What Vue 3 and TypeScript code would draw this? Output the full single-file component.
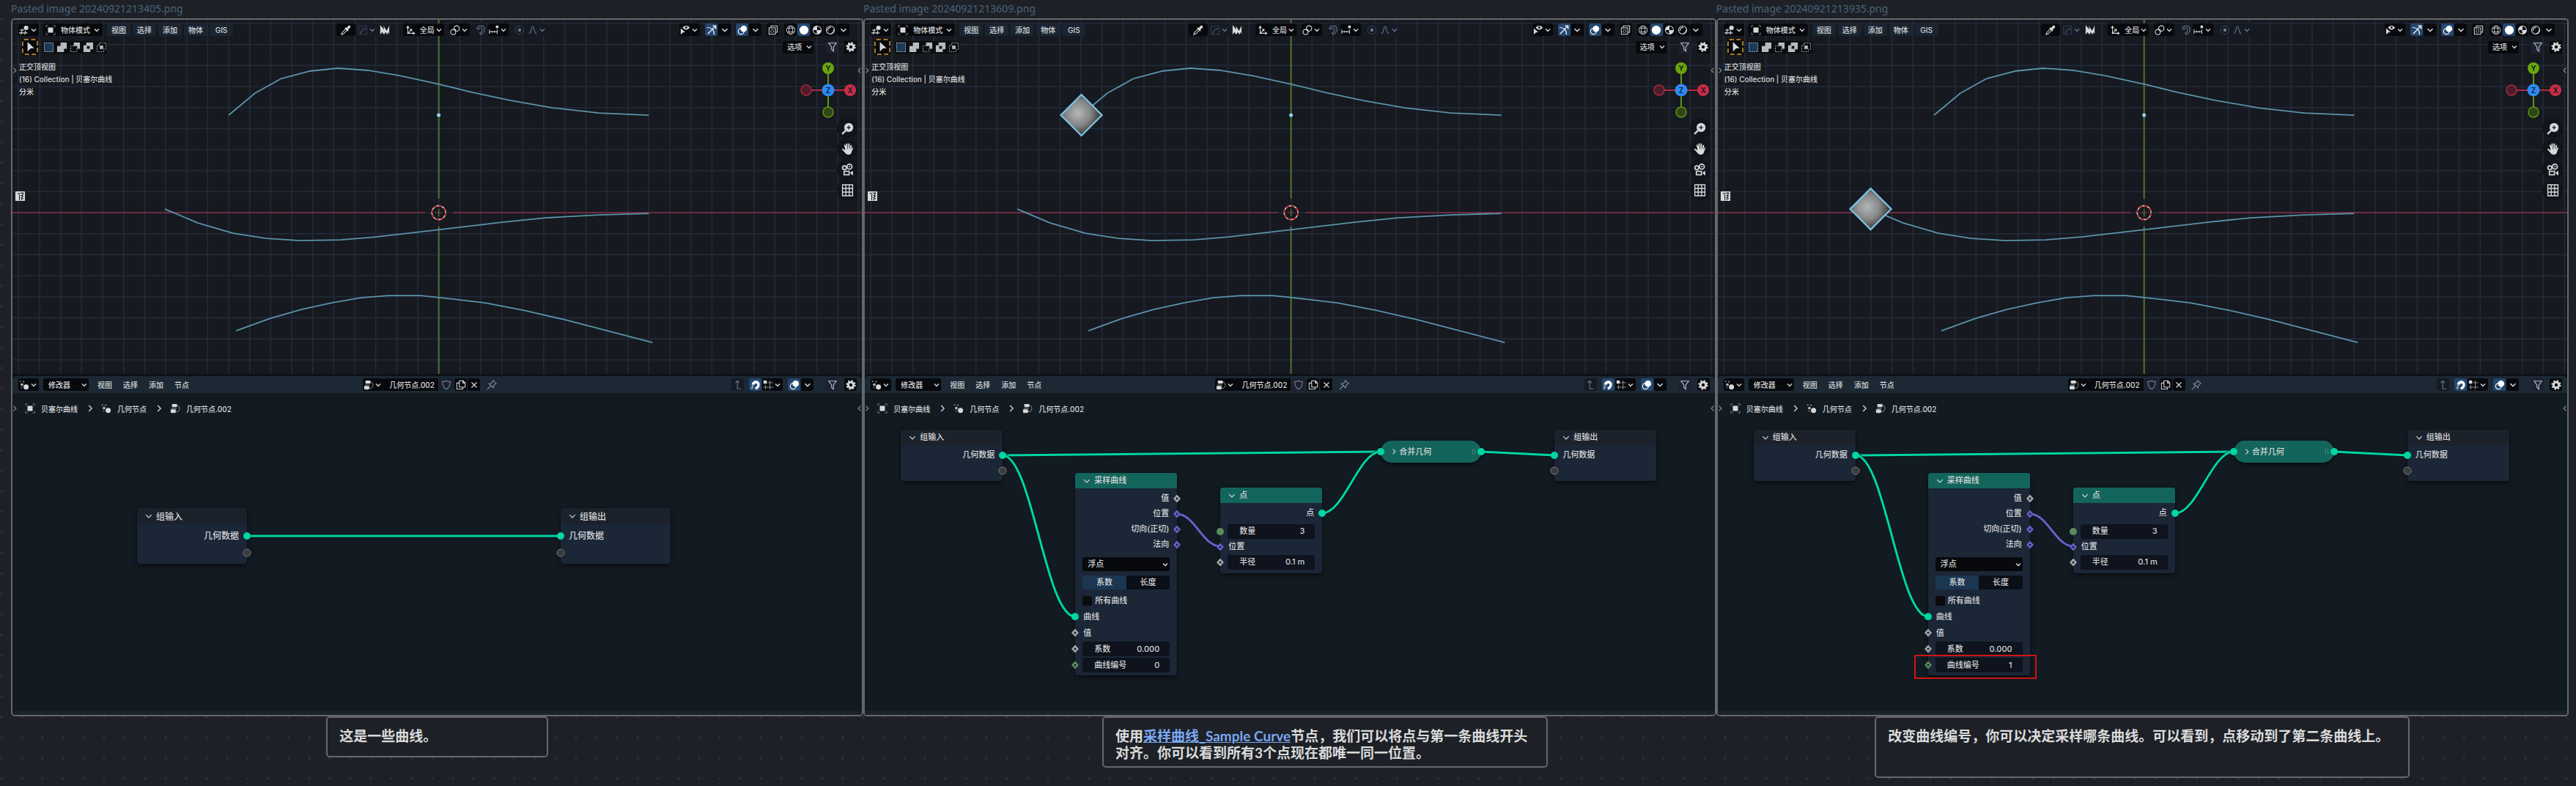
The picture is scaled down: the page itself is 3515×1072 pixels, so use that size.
<script setup lang="ts">
interface Tool { icon: string; name: string; drop?: boolean; on?: boolean; dim?: boolean; flat?: boolean }
type SocketKind = 'geo' | 'virtual' | 'value' | 'vector' | 'int' | 'count'
interface Row {
  kind: 'out' | 'in' | 'field' | 'select' | 'toggle' | 'check'
  label: string
  value?: string
  socket?: SocketKind
}
interface NodeBox { id: string; title: string; x: number; y: number; look: string; rows: Row[]; boxed?: boolean }
interface Link { d: string; color: string }
interface Note { size: string; parts: { text: string; link?: boolean }[][] }
interface Panel {
  id: string
  file: string
  gem?: [number, number]
  nodes: NodeBox[]
  links: Link[]
  note: Note
}

const GREEN = '#00d6a3'
const VIOLET = '#6660c8'
const STEP = 28.66
const ORIGIN = { x: 598.5, y: 290 }
const columns = Array.from({ length: 41 }, (_, i) => ORIGIN.x + (i - 20) * STEP)
const lines = Array.from({ length: 17 }, (_, i) => ORIGIN.y + (i - 9) * STEP)

const curves = [
  '312,157 348,127 384,107 422,97 461,93 503,96 545,103 600,115 645,126 697,137 754,147 817,154 885,157',
  '225,285 270,304 318,318 363,325 409,328 465,327 513,323 600,313 685,303 744,297 817,293 885,291',
  '322,451 369,434 411,422 452,413 492,406 530,403 574,403 620,408 662,413 714,423 771,436 890,467',
]

const paintTools: Tool[] = [
  { icon: 'arc', name: '曲线', drop: true, dim: true },
  { icon: 'spikes', name: '毛发', flat: true },
]
const midGroups: Tool[][] = [
  [{ icon: 'link', name: '轴心点', drop: true }],
  [{ icon: 'magnet', name: '吸附', dim: true }, { icon: 'steps', name: '吸附到', drop: true }],
  [{ icon: 'dot', name: '衰减编辑', dim: true }, { icon: 'bell', name: '衰减', drop: true, dim: true }],
]
const viewGroups: Tool[][] = [
  [{ icon: 'eye', name: '可见性', drop: true }],
  [{ icon: 'gizmo', name: '控件', on: true }, { icon: 'down', name: '控件选项' }],
  [{ icon: 'overlay', name: '叠加层', on: true }, { icon: 'down', name: '叠加层选项' }],
  [{ icon: 'xray', name: '透视模式' }],
  [
    { icon: 'wire', name: '线框' },
    { icon: 'solid', name: '实体', on: true },
    { icon: 'material', name: '材质' },
    { icon: 'render', name: '渲染' },
    { icon: 'down', name: '着色选项' },
  ],
]
const nodeGroups: Tool[][] = [
  [{ icon: 'parent', name: '上一级', dim: true }],
  [{ icon: 'magnetOn', name: '吸附', on: true }, { icon: 'snapGrid', name: '吸附到', drop: true }],
  [{ icon: 'overlay', name: '叠加层', on: true }, { icon: 'down', name: '叠加层选项' }],
]
const selectModes = ['modeSet', 'modeAdd', 'modeSub', 'modeDiff', 'modeAnd']
const viewMenus = ['视图', '选择', '添加', '物体', 'GIS']
const nodeMenus = ['视图', '选择', '添加', '节点']
const navTools = ['zoom', 'hand', 'camera', 'ortho']

const groupIn: Row[] = [
  { kind: 'out', label: '几何数据', socket: 'geo' },
  { kind: 'out', label: '', socket: 'virtual' },
]
const groupOut: Row[] = [
  { kind: 'in', label: '几何数据', socket: 'geo' },
  { kind: 'in', label: '', socket: 'virtual' },
]

function sampleNodes(index: string, boxed: boolean): NodeBox[] {
  return [
    { id: 'in', title: '组输入', x: 49, y: 50, look: 'group', rows: groupIn },
    {
      id: 'sample', title: '采样曲线', x: 287, y: 109, look: 'geometry sample', boxed,
      rows: [
        { kind: 'out', label: '值', socket: 'value' },
        { kind: 'out', label: '位置', socket: 'vector' },
        { kind: 'out', label: '切向(正切)', socket: 'vector' },
        { kind: 'out', label: '法向', socket: 'vector' },
        { kind: 'select', label: '浮点' },
        { kind: 'toggle', label: '系数', value: '长度' },
        { kind: 'check', label: '所有曲线' },
        { kind: 'in', label: '曲线', socket: 'geo' },
        { kind: 'in', label: '值', socket: 'value' },
        { kind: 'field', label: '系数', value: '0.000', socket: 'value' },
        { kind: 'field', label: '曲线编号', value: index, socket: 'int' },
      ],
    },
    {
      id: 'points', title: '点', x: 485, y: 129, look: 'geometry points',
      rows: [
        { kind: 'out', label: '点', socket: 'geo' },
        { kind: 'field', label: '数量', value: '3', socket: 'count' },
        { kind: 'in', label: '位置', socket: 'vector' },
        { kind: 'field', label: '半径', value: '0.1 m', socket: 'value' },
      ],
    },
    { id: 'join', title: '合并几何', x: 704, y: 65, look: 'pill', rows: [] },
    { id: 'out', title: '组输出', x: 941, y: 50, look: 'group', rows: groupOut },
  ]
}
const sampleLinks: Link[] = [
  { d: 'M188 85 L704 80', color: GREEN },
  { d: 'M188 85 C228 85 247 305 287 305', color: GREEN },
  { d: 'M624 164 C654 164 674 80 704 80', color: GREEN },
  { d: 'M841 80 L941 85', color: GREEN },
  { d: 'M426 165 C450 165 461 209 485 209', color: VIOLET },
]

const panels: Panel[] = [
  {
    id: 'a',
    file: 'Pasted image 20240921213405.png',
    nodes: [
      { id: 'in', title: '组输入', x: 170, y: 157, look: 'group large', rows: groupIn },
      { id: 'out', title: '组输出', x: 748, y: 157, look: 'group large', rows: groupOut },
    ],
    links: [{ d: 'M320 195 L748 195', color: GREEN }],
    note: { size: 'small', parts: [[{ text: '这是一些曲线。' }]] },
  },
  {
    id: 'b',
    file: 'Pasted image 20240921213609.png',
    gem: [312.5, 157],
    nodes: sampleNodes('0', false),
    links: sampleLinks,
    note: {
      size: 'medium',
      parts: [
        [
          { text: '使用' },
          { text: '采样曲线_Sample Curve', link: true },
          { text: '节点，我们可以将点与第一条曲线开头' },
        ],
        [{ text: '对齐。你可以看到所有3个点现在都唯一同一位置。' }],
      ],
    },
  },
  {
    id: 'c',
    file: 'Pasted image 20240921213935.png',
    gem: [225.5, 285],
    nodes: sampleNodes('1', true),
    links: sampleLinks,
    note: {
      size: 'wide',
      parts: [[{ text: '改变曲线编号，你可以决定采样哪条曲线。可以看到，点移动到了第二条曲线上。' }]],
    },
  },
]

const isRound = (s?: SocketKind) => s === 'geo' || s === 'virtual' || s === 'count'
const gemPoints = ([x, y]: [number, number]) => `${x},${y - 28} ${x + 28},${y} ${x},${y + 28} ${x - 28},${y}`
</script>

<template>
  <svg class="defs" aria-hidden="true">
    <defs>
      <radialGradient id="gemFill" cx="0.42" cy="0.45" r="0.55">
        <stop offset="0" stop-color="#b4b6b8" />
        <stop offset="0.55" stop-color="#858686" />
        <stop offset="1" stop-color="#383532" />
      </radialGradient>
    </defs>
    <symbol id="down" viewBox="0 0 16 16"><path d="M4 6l4 4 4-4" fill="none" stroke="currentColor" stroke-width="1.8" /></symbol>
    <symbol id="right" viewBox="0 0 16 16"><path d="M6 3.5l4.5 4.5L6 12.5" fill="none" stroke="currentColor" stroke-width="1.5" /></symbol>
    <symbol id="fold" viewBox="0 0 16 16"><path d="M3 5.5l5 5 5-5" fill="none" stroke="currentColor" stroke-width="1.6" /></symbol>
    <symbol id="editor" viewBox="0 0 16 16">
      <path d="M1 8h7M0 12.5h13M5 6L3 15M10 9l-1 6" fill="none" stroke="currentColor" stroke-width="1.3" /><circle cx="11" cy="4.5" r="3.5" fill="currentColor" />
    </symbol>
    <symbol id="object" viewBox="0 0 16 16">
      <rect x="4" y="4" width="8" height="8" fill="currentColor" /><path d="M1 4V1h3M12 1h3v3M15 12v3h-3M4 15H1v-3" fill="none" stroke="currentColor" stroke-opacity="0.6" />
    </symbol>
    <symbol id="cursor" viewBox="0 0 16 16"><path d="M5 2l8 7.5-4.2.3L5 13.5z" fill="currentColor" /></symbol>
    <symbol id="modeSet" viewBox="0 0 16 16"><rect x="1.5" y="1.5" width="13" height="13" fill="#1b3a57" stroke="#d8e6f0" stroke-dasharray="1.5 1.5" /></symbol>
    <symbol id="modeAdd" viewBox="0 0 16 16"><path d="M6 1h9v9h-4v5H1V6h5z" fill="currentColor" /></symbol>
    <symbol id="modeSub" viewBox="0 0 16 16"><path d="M6 1h9v9h-4V6H6z" fill="currentColor" /><path d="M6 6H1.5v8.5h9V10" fill="none" stroke="currentColor" stroke-dasharray="2 1.5" /></symbol>
    <symbol id="modeDiff" viewBox="0 0 16 16"><path fill-rule="evenodd" d="M5 1h10v10h-4v4H1V5h4zM6 6v4h4V6z" fill="currentColor" /></symbol>
    <symbol id="modeAnd" viewBox="0 0 16 16"><rect x="5.5" y="5.5" width="5" height="5" fill="currentColor" /><path d="M5 1.5h9.5V11H11v3.5H1.5V5H5z" fill="none" stroke="currentColor" stroke-dasharray="2 1.5" /></symbol>
    <symbol id="dropper" viewBox="0 0 16 16"><path d="M1 15l1-3 6-6 2 2-6 6z" fill="none" stroke="currentColor" stroke-width="1.2" /><path d="M7 4l2 .5L12 1c2-1 4 1 3 3l-3.5 3 .5 2-1.5 1L6 5.5z" fill="currentColor" /></symbol>
    <symbol id="arc" viewBox="0 0 16 16"><rect x="1.5" y="2" width="13" height="12.5" fill="none" stroke="currentColor" stroke-opacity="0.4" /><path d="M5 14c0-5 3-8 8-8" fill="none" stroke="currentColor" /></symbol>
    <symbol id="spikes" viewBox="0 0 16 16"><path d="M1 0l3 4 3 3L6 1l5 8 4-8v13l-2-3-1 4-3-4-2 4-3-4-3 4z" fill="currentColor" /></symbol>
    <symbol id="axes" viewBox="0 0 16 16"><path d="M4 14V3M2 5l2-3 2 3M3 13h11M12 11l2.5 2-2.5 2M4 13l6-6M7 7h3v3" fill="none" stroke="currentColor" stroke-width="1.2" /></symbol>
    <symbol id="link" viewBox="0 0 16 16"><circle cx="10.5" cy="5.5" r="4.2" fill="none" stroke="currentColor" stroke-width="1.3" /><circle cx="5" cy="11" r="4" fill="none" stroke="currentColor" stroke-width="1.3" /><circle cx="8" cy="8" r="1.5" fill="currentColor" /></symbol>
    <symbol id="magnet" viewBox="0 0 16 16"><path d="M2 6C4 0 13 0 14 6c0 4-2 7-6 9l-1.5-2.5C10 11 11 8 10 6 9 4 6 4 5 7z" fill="none" stroke="currentColor" stroke-width="1.2" /></symbol>
    <symbol id="magnetOn" viewBox="0 0 16 16"><path d="M2 7C3 0 14-.5 14.5 7c0 4-2 7-6 8.5L7 12c3-1 4-3 3.5-5C10 5 7 5 6 8z" fill="currentColor" /><path d="M2 9l2.5 1M1 13l3-.5" stroke="currentColor" stroke-width="1.5" /></symbol>
    <symbol id="steps" viewBox="0 0 16 16"><path d="M1 7v7M5 9v3M9 9v3M13 7v7M1 10.5h12" fill="none" stroke="currentColor" stroke-width="1.2" /><rect x="11" y="1" width="4" height="4" fill="currentColor" /></symbol>
    <symbol id="dot" viewBox="0 0 16 16"><circle cx="8" cy="8" r="6.5" fill="none" stroke="currentColor" stroke-opacity="0.5" /><circle cx="8" cy="8" r="2.5" fill="currentColor" /></symbol>
    <symbol id="bell" viewBox="0 0 16 16"><path d="M2 13.5c5-1 3-11 6-11s1 10 6 11" fill="none" stroke="currentColor" stroke-width="1.2" /></symbol>
    <symbol id="eye" viewBox="0 0 16 16"><path d="M4 4c3-4 8-4 11 0-3 4.5-8 4.5-11 0z" fill="currentColor" /><circle cx="9.5" cy="4" r="1.6" fill="#07090d" /><path d="M1 5l7 6.5-3.5.3L1 15z" fill="currentColor" /></symbol>
    <symbol id="gizmo" viewBox="0 0 16 16"><path d="M1 4c7 0 11 4 11 11M2 14L14 2M9.5 1.5h5v5" fill="none" stroke="currentColor" stroke-width="1.4" /></symbol>
    <symbol id="overlay" viewBox="0 0 16 16"><circle cx="10" cy="6" r="5" fill="currentColor" /><circle cx="6" cy="10" r="4.5" fill="none" stroke="currentColor" stroke-width="1.3" /></symbol>
    <symbol id="xray" viewBox="0 0 16 16"><path d="M4.5 4.5V1.5h10v10h-3" fill="none" stroke="currentColor" stroke-width="1.2" /><rect x="1.5" y="4.5" width="10" height="10" fill="none" stroke="currentColor" stroke-width="1.2" /><path d="M4.5 11.5v-4h4v4z" fill="none" stroke="currentColor" stroke-dasharray="2 1" /></symbol>
    <symbol id="wire" viewBox="0 0 16 16"><g fill="none" stroke="currentColor"><circle cx="8" cy="8" r="6.5" /><ellipse cx="8" cy="8" rx="3" ry="6.5" /><path d="M2.5 5h11M2.5 11h11" /></g></symbol>
    <symbol id="solid" viewBox="0 0 16 16"><circle cx="8" cy="8" r="7" fill="currentColor" /></symbol>
    <symbol id="material" viewBox="0 0 16 16"><circle cx="8" cy="8" r="6.3" fill="none" stroke="currentColor" stroke-width="1.2" /><path d="M8 1.5V8H1.5A6.5 6.5 0 0 1 8 1.5zM8 8h6.5A6.5 6.5 0 0 1 8 14.5L7 9z" fill="currentColor" /></symbol>
    <symbol id="render" viewBox="0 0 16 16"><circle cx="8" cy="8" r="6.3" fill="none" stroke="currentColor" stroke-width="1.3" /><path d="M4 9a4.5 4.5 0 0 1 5-5" fill="none" stroke="currentColor" stroke-width="1.5" /><path d="M13.5 6a6 6 0 0 1-7 8c4-1 6-3 7-8z" fill="currentColor" /></symbol>
    <symbol id="filter" viewBox="0 0 16 16"><path d="M2 2h12L9.5 8v6.5L6.5 12V8z" fill="none" stroke="currentColor" stroke-width="1.3" /></symbol>
    <symbol id="gear" viewBox="0 0 16 16"><circle cx="8" cy="8" r="4.2" fill="none" stroke="currentColor" stroke-width="3.4" /><circle cx="8" cy="8" r="6.5" fill="none" stroke="currentColor" stroke-width="2.4" stroke-dasharray="2.55 2.55" /></symbol>
    <symbol id="zoom" viewBox="0 0 16 16"><circle cx="9.5" cy="6.5" r="5.8" fill="currentColor" /><path d="M5.5 10.5L1 15" stroke="currentColor" stroke-width="2.2" /><path d="M9.5 4v5M7 6.5h5" stroke="#14181e" stroke-width="1.3" /></symbol>
    <symbol id="hand" viewBox="0 0 16 16"><path d="M4.5 3L6 8M7 1.5V8M9.8 1.5L9.5 8M12.5 3.5L11.5 9" fill="none" stroke="currentColor" stroke-width="1.9" stroke-linecap="round" /><path d="M4.5 8H13l1-2c1-.8 1.5 0 1 1l-2.5 6.5c-1 2-5.500 2-7 0L1 8.500c-.5-1.500 1-1.500 1.800-.8L4.500 9.500z" fill="currentColor" /></symbol>
    <symbol id="camera" viewBox="0 0 16 16"><g fill="none" stroke="currentColor" stroke-width="1.6"><circle cx="4" cy="5.5" r="2.5" /><circle cx="10.5" cy="4" r="3.2" /><rect x="3.5" y="10" width="6.5" height="4.5" /></g><path d="M11 12l4-2.5v6z" fill="currentColor" /><circle cx="10.5" cy="4" r="1" fill="currentColor" /></symbol>
    <symbol id="ortho" viewBox="0 0 16 16"><path d="M1.5 1h13v14h-13zM5.8 1v14M10.2 1v14M1.5 5.6h13M1.5 10.3h13" fill="none" stroke="currentColor" stroke-width="1.3" /></symbol>
    <symbol id="modifier" viewBox="0 0 16 16"><circle cx="11" cy="11" r="4" fill="currentColor" /><circle cx="4.5" cy="7.5" r="2.2" fill="currentColor" fill-opacity="0.8" /><g fill="currentColor" fill-opacity="0.6"><circle cx="2" cy="2.5" r="1.2" /><circle cx="7" cy="3" r="1.3" /><circle cx="4" cy="12" r="1" /></g></symbol>
    <symbol id="tree" viewBox="0 0 16 16"><rect x="3" y="1" width="8" height="5" rx="1.5" fill="currentColor" /><rect x="1" y="9.5" width="8" height="5.5" rx="1.5" fill="currentColor" /><path d="M2 8h8M11 3.5c5 0 5 9 0 9.5H9" fill="none" stroke="currentColor" stroke-opacity="0.7" /></symbol>
    <symbol id="shield" viewBox="0 0 16 16"><path d="M8 1.5c2 1.2 4 1.5 6 1.5 0 6-2 9.5-6 11.5C4 12.5 2 9 2 3c2 0 4-.3 6-1.5z" fill="none" stroke="currentColor" stroke-width="1.2" /></symbol>
    <symbol id="copy" viewBox="0 0 16 16"><path d="M5.5 1.5h6l3 3v7h-9z M11 2v3h3M5 5H1.5v9.5H11V12" fill="none" stroke="currentColor" stroke-width="1.2" /></symbol>
    <symbol id="close" viewBox="0 0 16 16"><path d="M4 4l8 8M12 4l-8 8" stroke="currentColor" stroke-width="1.4" /></symbol>
    <symbol id="pin" viewBox="0 0 16 16"><path d="M10 1l5 5-1.5.5L11 9l-.5 3.5L3.5 6 7 5.5 9.5 3zM6.5 9.5L1 15" fill="none" stroke="currentColor" stroke-width="1.2" /></symbol>
    <symbol id="parent" viewBox="0 0 16 16"><path d="M7 2v12h6M4 5l3-3.5L10 5" fill="none" stroke="currentColor" stroke-width="1.2" /></symbol>
    <symbol id="snapGrid" viewBox="0 0 16 16"><rect x="1" y="1" width="5" height="5" fill="currentColor" /><path d="M11 1v14M4 8v7M7 4.5h9M1 11.5h15" fill="none" stroke="currentColor" stroke-opacity="0.7" /></symbol>
    <symbol id="palette" viewBox="0 0 16 16"><rect x="1" y="1" width="14" height="14" rx="1" fill="currentColor" /><path d="M4 4h4M7 5v9M9 3l4 2M9 7l4 1M9 10l4 2M12 2l-2 12" stroke="#171b22" stroke-width="1.1" /></symbol>
  </svg>

  <main class="board">
    <section v-for="panel in panels" :key="panel.id" class="column">
      <h2 class="file">{{ panel.file }}</h2>
      <article class="panel">
        <div class="viewport">
          <svg class="scene" viewBox="17 27 1159 483" preserveAspectRatio="xMidYMid slice">
            <g stroke="#222a3a" stroke-width="1.6">
              <line v-for="x in columns" :key="'c' + x" :x1="x" :x2="x" y1="27" y2="510" />
              <line v-for="y in lines" :key="'l' + y" x1="17" x2="1176" :y1="y" :y2="y" />
            </g>
            <path d="M17 290H580M618 290H1176" stroke="#6e2b41" stroke-width="2" />
            <path d="M598.5 27V271M598.5 309V510" stroke="#4c7430" stroke-width="2" />
            <polyline v-for="c in curves" :key="c" :points="c" fill="none" stroke="#5a93ab" stroke-width="1.8" stroke-linejoin="round" />
            <circle cx="598.5" cy="157" r="2.5" fill="#8fd3f4" />
            <path d="M594 290h9" stroke="#6e2b41" stroke-width="1.5" /><path d="M598.5 285v10" stroke="#4c7430" stroke-width="1.5" />
            <circle :cx="ORIGIN.x" :cy="ORIGIN.y" r="9.5" fill="none" stroke="#d8d8d8" stroke-width="1.5" />
            <circle :cx="ORIGIN.x" :cy="ORIGIN.y" r="9.5" fill="none" stroke="#d3201c" stroke-width="1.8" stroke-dasharray="4.46 3" />
            <polygon v-if="panel.gem" :points="gemPoints(panel.gem)" fill="url(#gemFill)" stroke="#7cc6ea" stroke-width="2.2" />
          </svg>

          <div class="bar">
            <div class="side lead">
              <button class="tool drop" aria-label="编辑器类型"><svg><use href="#editor" /></svg><svg class="chev"><use href="#down" /></svg></button>
              <label class="pick mode">
                <svg><use href="#object" /></svg>
                <select aria-label="模式"><option>物体模式</option></select>
                <svg class="chev"><use href="#down" /></svg>
              </label>
              <nav class="menus filled"><button v-for="m in viewMenus" :key="m">{{ m }}</button></nav>
            </div>
            <div class="side mid">
              <div class="joined loose">
                <button class="tool wide" aria-label="吸管"><svg><use href="#dropper" /></svg></button>
                <button v-for="t in paintTools" :key="t.name" class="tool" :class="{ drop: t.drop, dim: t.dim, flat: t.flat }" :aria-label="t.name">
                  <svg><use :href="'#' + t.icon" /></svg><svg v-if="t.drop" class="chev"><use href="#down" /></svg>
                </button>
              </div>
              <label class="pick axis">
                <svg><use href="#axes" /></svg>
                <select aria-label="坐标系"><option>全局</option></select>
                <svg class="chev"><use href="#down" /></svg>
              </label>
              <div v-for="(g, i) in midGroups" :key="i" class="joined">
                <button v-for="t in g" :key="t.name" class="tool" :class="{ drop: t.drop, on: t.on, dim: t.dim }" :aria-label="t.name">
                  <svg><use :href="'#' + t.icon" /></svg><svg v-if="t.drop" class="chev"><use href="#down" /></svg>
                </button>
              </div>
            </div>
            <div class="side tail">
              <div v-for="(g, i) in viewGroups" :key="i" class="joined">
                <button v-for="t in g" :key="t.name" class="tool" :class="{ drop: t.drop, on: t.on }" :aria-label="t.name">
                  <svg><use :href="'#' + t.icon" /></svg><svg v-if="t.drop" class="chev"><use href="#down" /></svg>
                </button>
              </div>
            </div>
          </div>

          <div class="bar second">
            <div class="side lead">
              <button class="picker" aria-label="框选"><svg><use href="#cursor" /></svg></button>
              <div class="modes">
                <button v-for="m in selectModes" :key="m" :aria-label="m"><svg><use :href="'#' + m" /></svg></button>
              </div>
            </div>
            <div class="side tail end">
              <label class="pick options">
                <select aria-label="选项"><option>选项</option></select>
                <svg class="chev"><use href="#down" /></svg>
              </label>
              <button class="tool soft" aria-label="过滤"><svg><use href="#filter" /></svg></button>
              <button class="tool" aria-label="设置"><svg><use href="#gear" /></svg></button>
            </div>
          </div>

          <div class="stage">
            <div class="info">
              <p>正交顶视图<br />(16) Collection | 贝塞尔曲线<br />分米</p>
              <svg class="palette"><use href="#palette" /></svg>
            </div>
            <div class="nav">
              <svg class="gizmo" viewBox="0 0 78 77">
                <path d="M9 39H69" stroke="#b52a42" stroke-width="2" /><path d="M39 9V69" stroke="#5f9412" stroke-width="2" />
                <circle cx="9" cy="39" r="7" fill="#4c1c28" stroke="#a82b40" stroke-width="1.5" />
                <circle cx="39" cy="69" r="7" fill="#2f4716" stroke="#5f9412" stroke-width="1.5" />
                <circle cx="39" cy="9" r="8" fill="#68a50e" /><circle cx="69" cy="39" r="8" fill="#c92e48" /><circle cx="39" cy="39" r="8.5" fill="#2b8bf5" />
                <text x="39" y="13">Y</text><text x="69" y="43">X</text><text x="39" y="43">Z</text>
              </svg>
              <button v-for="n in navTools" :key="n" :aria-label="n"><svg><use :href="'#' + n" /></svg></button>
            </div>
          </div>
          <svg class="tab left"><use href="#right" /></svg>
          <svg class="tab flip"><use href="#right" /></svg>
        </div>

        <div class="bar nodebar">
          <div class="side lead">
            <button class="tool drop" aria-label="编辑器类型"><svg><use href="#modifier" /></svg><svg class="chev"><use href="#down" /></svg></button>
            <label class="pick kind">
              <select aria-label="类型"><option>修改器</option></select>
              <svg class="chev"><use href="#down" /></svg>
            </label>
            <nav class="menus"><button v-for="m in nodeMenus" :key="m">{{ m }}</button></nav>
          </div>
          <div class="side mid">
            <div class="joined">
              <button class="tool drop" aria-label="浏览节点树"><svg><use href="#tree" /></svg><svg class="chev"><use href="#down" /></svg></button>
              <input class="name" aria-label="节点树名称" value="几何节点.002" />
              <button class="tool soft wider" aria-label="伪用户"><svg><use href="#shield" /></svg></button>
              <button class="tool" aria-label="复制"><svg><use href="#copy" /></svg></button>
              <button class="tool" aria-label="断开"><svg><use href="#close" /></svg></button>
            </div>
            <button class="tool bare" aria-label="固定"><svg><use href="#pin" /></svg></button>
          </div>
          <div class="side tail end">
            <div class="side cluster">
              <div v-for="(g, i) in nodeGroups" :key="i" class="joined">
                <button v-for="t in g" :key="t.name" class="tool" :class="{ drop: t.drop, on: t.on, dim: t.dim }" :aria-label="t.name">
                  <svg><use :href="'#' + t.icon" /></svg><svg v-if="t.drop" class="chev"><use href="#down" /></svg>
                </button>
              </div>
            </div>
            <button class="tool soft" aria-label="过滤"><svg><use href="#filter" /></svg></button>
            <button class="tool" aria-label="设置"><svg><use href="#gear" /></svg></button>
          </div>
        </div>

        <div class="canvas">
          <nav class="crumbs">
            <svg><use href="#object" /></svg><span>贝塞尔曲线</span>
            <svg class="sep"><use href="#right" /></svg>
            <svg><use href="#modifier" /></svg><span>几何节点</span>
            <svg class="sep"><use href="#right" /></svg>
            <svg><use href="#tree" /></svg><span>几何节点.002</span>
          </nav>
          <svg class="tab low left"><use href="#right" /></svg>
          <svg class="tab low flip"><use href="#right" /></svg>
          <svg class="wires">
            <g v-for="l in panel.links" :key="l.d" fill="none">
              <path :d="l.d" stroke="#0a1015" stroke-width="5" stroke-opacity="0.6" />
              <path :d="l.d" :stroke="l.color" stroke-width="3" />
            </g>
          </svg>
          <section v-for="n in panel.nodes" :key="n.id" class="node" :class="n.look" :style="{ left: n.x + 'px', top: n.y + 'px' }">
            <header><svg><use :href="n.look === 'pill' ? '#right' : '#fold'" /></svg>{{ n.title }}</header>
            <template v-if="n.look === 'pill'">
              <i class="grip"></i>
              <svg class="socket geo in" viewBox="0 0 12 12"><circle cx="6" cy="6" r="5" /></svg>
              <svg class="socket geo out" viewBox="0 0 12 12"><circle cx="6" cy="6" r="5" /></svg>
            </template>
            <div v-else class="rows">
              <div v-for="(r, i) in n.rows" :key="i" class="row" :class="r.kind">
                <svg v-if="r.socket" class="socket" :class="[r.socket, r.kind === 'out' ? 'out' : 'in']" viewBox="0 0 12 12">
                  <circle v-if="isRound(r.socket)" cx="6" cy="6" r="5" />
                  <template v-else><path d="M6 0.5L11 6 6 11.5 1 6z" /><circle class="core" cx="6" cy="6" r="1.5" /></template>
                </svg>
                <label v-if="r.kind === 'field'" class="number"><span>{{ r.label }}</span><input :value="r.value" /></label>
                <label v-else-if="r.kind === 'select'" class="pick full">
                  <select aria-label="数据类型"><option>{{ r.label }}</option></select>
                  <svg class="chev"><use href="#down" /></svg>
                </label>
                <div v-else-if="r.kind === 'toggle'" class="pair">
                  <button class="active">{{ r.label }}</button><button>{{ r.value }}</button>
                </div>
                <label v-else-if="r.kind === 'check'" class="tick"><input type="checkbox" />{{ r.label }}</label>
                <span v-else>{{ r.label }}</span>
              </div>
            </div>
            <i v-if="n.boxed" class="mark"></i>
          </section>
        </div>
      </article>

      <aside class="note" :class="panel.note.size">
        <p v-for="(line, i) in panel.note.parts" :key="i">
          <template v-for="p in line" :key="p.text"><a v-if="p.link" href="#">{{ p.text }}</a><template v-else>{{ p.text }}</template></template>
        </p>
      </aside>
    </section>
  </main>
</template>

<style>
body {
  margin: 0;
  background: #1d2127;
}
</style>

<style scoped>
* {
  box-sizing: border-box;
}
.defs {
  position: absolute;
  width: 0;
  height: 0;
}
.board {
  display: grid;
  grid-template-columns: repeat(3, minmax(0, 1fr));
  min-height: 100vh;
  padding: 0 10px 0 15px;
  background: radial-gradient(circle at 2px 26px, #2e3339 0, #2e3339 1px, transparent 2px) 0 0 / 28px 28px #1d2127;
  font-family: Inter, "Noto Sans CJK SC", sans-serif;
  font-size: 10px;
  font-weight: 500;
  color: #d6d8da;
}
.column {
  display: flex;
  flex-direction: column;
  align-items: center;
}
.file {
  align-self: stretch;
  height: 25px;
  margin: 0;
  background: #1d2127;
  font: 400 14px/24px "Noto Sans", sans-serif;
  color: #4d6178;
  white-space: nowrap;
}
.panel {
  position: relative;
  align-self: stretch;
  display: flex;
  flex-direction: column;
  border: 2px solid #65686a;
  border-radius: 5px;
  background: #0c1116;
  overflow: hidden;
}
button,
select,
input {
  margin: 0;
  padding: 0;
  border: 0;
  background: none;
  font: inherit;
  color: inherit;
  appearance: none;
}
svg {
  display: block;
  flex: none;
}

/* 3D viewport */
.viewport {
  position: relative;
  aspect-ratio: 1159 / 483;
  padding-top: 5px;
  background: #16191f;
}
.scene {
  position: absolute;
  inset: 0;
  width: 100%;
  height: 100%;
}
.bar {
  position: relative;
  display: grid;
  grid-template-columns: 1fr auto 1fr;
  align-items: center;
}
.second {
  grid-template-columns: 1fr auto;
  height: 22px;
  margin-top: 4px;
}
.side {
  display: flex;
  align-items: center;
}
.lead {
  gap: 6px;
  padding-left: 8px;
}
.mid {
  gap: 7px;
  padding-left: 12px;
}
.tail {
  gap: 7px;
  justify-content: flex-end;
  padding-right: 17px;
}
.tail.end {
  gap: 8px;
  padding-right: 7px;
}
.end .soft {
  margin: 0 0 0 9px;
}
.joined {
  display: flex;
  gap: 1px;
}
.joined.loose {
  gap: 2px;
}
.tool {
  display: flex;
  align-items: center;
  justify-content: center;
  width: 17px;
  height: 17px;
  border-radius: 3px;
  background: #07090d;
}
.tool svg,
.pick svg {
  width: 14px;
  height: 14px;
}
.tool svg.chev,
.pick svg.chev {
  width: 12px;
  height: 12px;
}
.tool.drop {
  width: 28px;
}
.tool.wide {
  width: 26px;
}
.tool.on {
  background: #234770;
  color: #fff;
}
.tool.dim {
  background: #141b26;
  color: #72777e;
}
.tool.flat,
.tool.bare {
  background: none;
}
.tool.bare {
  color: #8b9298;
}
.tool.soft {
  background: #1b2130;
  color: #b9bdc3;
}
.tool.wider {
  width: 20px;
  color: #7d8590;
}
.pick {
  display: flex;
  align-items: center;
  height: 17px;
  border-radius: 3px;
  background: #07090d;
}
.pick select {
  flex: 1;
  min-width: 0;
  height: 17px;
}
.mode {
  width: 81px;
  padding: 0 2px 0 3px;
}
.mode select {
  margin-left: 7px;
}
.axis {
  width: 56px;
  margin-left: 9px;
  padding: 0 1px 0 3px;
}
.axis select {
  margin-left: 6px;
}
.options {
  width: 42px;
  padding: 0 0 0 6px;
}
.kind {
  width: 62px;
  padding-left: 7px;
}
.menus {
  display: flex;
  gap: 3px;
}
.menus button {
  min-width: 32px;
  height: 17px;
  padding: 0 6px;
  border-radius: 3px;
}
.menus.filled button {
  background: #1b2531;
}
.picker {
  width: 22px;
  height: 22px;
  margin-left: 5px;
  border: 2px dashed #a87a1e;
  border-radius: 3px;
  background: #07090d;
}
.picker svg {
  width: 18px;
  height: 18px;
}
.modes {
  display: flex;
  gap: 2px;
  border-radius: 3px;
  background: #0b0d11;
}
.modes button {
  display: grid;
  place-items: center;
  width: 16px;
  height: 17px;
  color: #b9bbbd;
}
.modes svg {
  width: 15px;
  height: 15px;
}
.stage {
  position: relative;
  display: flex;
  justify-content: space-between;
  margin-top: 8px;
}
.info {
  display: flex;
  flex-direction: column;
  justify-content: space-between;
}
.info p {
  margin: 0 0 0 9px;
  line-height: 17px;
}
.palette {
  width: 15px;
  height: 15px;
  margin-left: 3px;
}
.nav {
  display: flex;
  flex-direction: column;
  align-items: flex-end;
  padding: 1px 6px 2px 0;
}
.gizmo {
  width: 78px;
  height: 77px;
  margin-right: 1px;
}
.gizmo text {
  font: 600 10px Inter, sans-serif;
  text-anchor: middle;
  fill: #10161c;
}
.nav button {
  display: grid;
  place-items: center;
  width: 28px;
  height: 28px;
  border-radius: 14px;
  background: #11141a;
}
.nav button svg {
  width: 17px;
  height: 17px;
}
.tab {
  position: absolute;
  top: 63px;
  width: 12px;
  height: 12px;
  color: #8f9498;
}
.tab.low {
  top: 15px;
}
.tab.left {
  left: -3px;
}
.tab.flip {
  right: -3px;
  rotate: 180deg;
}

/* node editor */
.nodebar {
  height: 23px;
  margin-top: 3px;
  border-radius: 5px 5px 0 0;
  background: #1c2833;
}
.nodebar .mid {
  padding: 0 19px 0 0;
}
.nodebar .cluster {
  gap: 7px;
}
.name {
  width: 75px;
  height: 17px;
  margin-left: -1px;
  padding-left: 8px;
  background: #07090d;
}
.canvas {
  position: relative;
  min-height: 439px;
  border-bottom: 5px solid #1b232d;
  background: #131b22;
  font-size: 11px;
}
.crumbs {
  display: flex;
  align-items: center;
  height: 42px;
  padding-left: 17px;
  font-size: 10px;
  gap: 8px;
}
.crumbs svg {
  width: 14px;
  height: 14px;
}
.crumbs .sep {
  margin-left: 2px;
}
.wires {
  position: absolute;
  inset: 0;
  width: 100%;
  height: 100%;
}
.node {
  position: absolute;
  width: 139px;
  border-radius: 4px;
  background: #1b2636;
  box-shadow: 0 3px 7px rgba(0, 0, 0, 0.55), 0 0 0 1px #10161f;
  line-height: 15px;
}
.node header {
  display: flex;
  align-items: center;
  gap: 4px;
  height: 21px;
  padding-left: 10px;
  border-radius: 4px 4px 0 0;
  background: #13655b;
}
.node header svg {
  width: 12px;
  height: 12px;
}
.group header {
  background: #1c222b;
}
.rows {
  padding: 3px 0 5px;
}
.group .rows {
  padding-bottom: 4px;
}
.row {
  position: relative;
  display: flex;
  align-items: center;
  height: 21px;
  padding: 0 11px;
}
.row.out {
  justify-content: flex-end;
}
.large {
  width: 150px;
  font-size: 12px;
}
.large header {
  height: 22px;
}
.large .row {
  height: 23px;
}
.large .rows {
  padding-top: 4px;
}
.socket {
  position: absolute;
  top: calc(50% - 6px);
  width: 12px;
  height: 12px;
  fill: #a5a5a5;
}
.socket.in {
  left: -6px;
}
.socket.out {
  right: -6px;
}
.socket.geo {
  fill: #00d6a3;
}
.socket.virtual {
  fill: #3b3b3b;
  stroke: #77797b;
}
.socket.vector {
  fill: #6660c8;
}
.socket.int,
.socket.count {
  fill: #5a8c5c;
}
.core {
  fill: #182030;
}
.row.field,
.row.select,
.row.toggle,
.row.check {
  padding: 0 10px;
}
.number {
  display: flex;
  flex: 1;
  align-items: center;
  justify-content: space-between;
  min-width: 0;
  height: 20px;
  padding: 0 14px 0 16px;
  border-radius: 3px;
  background: #0e131d;
}
.number span {
  flex: none;
}
.number input {
  width: 40px;
  text-align: right;
}
.row.select {
  height: 19px;
  margin-top: 7px;
}
.full {
  flex: 1;
  height: 19px;
  padding-left: 7px;
}
.row.toggle {
  height: 19px;
  margin-top: 6px;
}
.pair {
  display: flex;
  flex: 1;
  height: 19px;
  border-radius: 3px;
  background: #0b0f17;
  overflow: hidden;
}
.pair button {
  flex: 1;
}
.pair .active {
  background: #1b3650;
}
.row.check {
  height: 22px;
  margin-top: 4px;
}
.tick {
  display: flex;
  align-items: center;
  gap: 4px;
}
.tick input {
  width: 13px;
  height: 13px;
  border-radius: 2px;
  background: #0b0b0d;
}
.sample .in.row,
.sample .field.row {
  height: 22px;
}
.sample .rows {
  padding-bottom: 3px;
}
.points .out + .field {
  margin-top: 4px;
}
.pill {
  width: 137px;
  height: 30px;
  border-radius: 15px;
  background: #13655b;
}
.pill header {
  height: 30px;
  gap: 1px;
  padding-left: 12px;
  background: none;
}
.grip {
  position: absolute;
  top: 11px;
  right: 8px;
  width: 4px;
  height: 8px;
  border: solid #3f8a80;
  border-width: 0 1px;
}
.mark {
  position: absolute;
  left: -19px;
  right: -9px;
  bottom: -5px;
  height: 33px;
  border: 2px solid #d01414;
}

/* captions */
.note {
  max-width: 100%;
  padding: 13px 14px 7px 16px;
  border: 2px solid #65686a;
  border-radius: 5px;
  background: #1d2127;
  font: 700 19px/23px Lato, "Noto Sans CJK SC", sans-serif;
  color: #dadada;
}
.note p {
  margin: 0;
}
.note a {
  color: #79a8f2;
}
.small {
  width: 303px;
  min-height: 56px;
}
.medium {
  align-self: flex-start;
  width: 608px;
  min-height: 70px;
  margin-left: 28%;
}
.wide.note {
  width: 730px;
  min-height: 84px;
}
</style>
